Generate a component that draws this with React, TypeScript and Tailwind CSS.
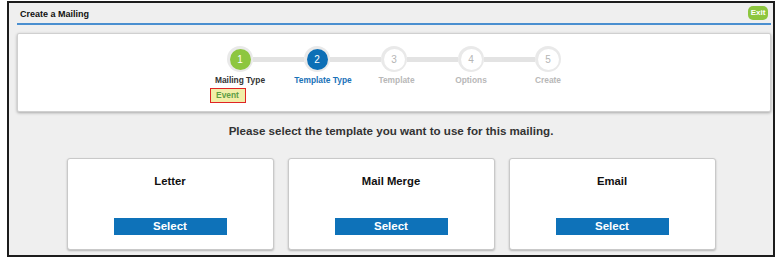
import React from "react";

const steps = [
  { n: 1, label: "Mailing Type", state: "done", shift: "" },
  { n: 2, label: "Template Type", state: "active", shift: "ml-[12px]" },
  { n: 3, label: "Template", state: "todo", shift: "ml-[5px]" },
  { n: 4, label: "Options", state: "todo", shift: "" },
  { n: 5, label: "Create", state: "todo", shift: "" },
];

function Step({ n, label, state, shift, first, last }: { n: number; label: string; state: string; shift: string; first: boolean; last: boolean }) {
  const inner =
    state === "done"
      ? "bg-[#8dc63f] text-white"
      : state === "active"
      ? "bg-[#0d6fb6] text-white"
      : "bg-white text-[#b5b5b5]";
  const labelColor =
    state === "done" ? "text-[#333333]" : state === "active" ? "text-[#1a72b8]" : "text-[#b8b8b8]";
  return (
    <div className="w-[77px] flex flex-col items-center">
      <div className="w-full h-[26px] flex items-center">
        <div className={`flex-1 h-[5px] ${first ? "" : "bg-[#e3e3e3]"}`} />
        <div className="w-[26px] h-[26px] rounded-full bg-[#e9e9e9] flex items-center justify-center">
          <div className={`w-[21px] h-[21px] rounded-full flex items-center justify-center text-[10px] ${inner}`}>
            {n}
          </div>
        </div>
        <div className={`flex-1 h-[5px] ${last ? "" : "bg-[#e3e3e3]"}`} />
      </div>
      <div className={`mt-[3px] leading-[10px] text-[8.4px] font-bold whitespace-nowrap ${labelColor} ${shift}`}>{label}</div>
      {n === 1 && (
        <div className="self-start ml-[8px] mt-[3px] w-[36px] h-[15px] border border-[#e02424] bg-[#f1eea8] flex items-center justify-center">
          <span className="text-[8.4px] font-bold text-[#5f9e45] leading-none">Event</span>
        </div>
      )}
    </div>
  );
}

function Card({ title }: { title: string }) {
  return (
    <div className="w-[207px] h-[92px] bg-white border border-[#c9c9c9] rounded-[3px] shadow-[0_1px_2px_rgba(0,0,0,0.25)] flex flex-col items-center pt-[15px]">
      <div className="text-[11.3px] font-bold leading-[14px] text-[#111]">{title}</div>
      <div className="mt-[30px] w-[113px] h-[17px] bg-[#0e72b9] flex items-center justify-center">
        <span className="text-white text-[11.5px] font-bold leading-none">Select</span>
      </div>
    </div>
  );
}

export default function App() {
  return (
    <div className="w-[782px] h-[263px] bg-white pt-px" style={{ fontFamily: '"Liberation Sans", Arial, sans-serif' }}>
      <div className="ml-[7px] w-[768px] h-[256px] border-2 border-[#1c1c1c] bg-[#efefef] flex flex-col">
        <div className="ml-[8px] mr-[2px] h-[22px] border-b-2 border-[#4a8fd0] flex items-start justify-between">
          <div className="mt-[6px] ml-[3px] text-[9px] font-bold leading-[10px] text-[#111]">Create a Mailing</div>
          <div className="mt-[3px] mr-[3px] w-[20px] h-[14px] rounded-[5px] bg-[#8dc63f] flex items-center justify-center">
            <span className="text-white text-[8px] font-bold leading-none">Exit</span>
          </div>
        </div>
        <div className="ml-[8px] mr-[2px] mt-[8px] bg-white border border-[#d0d0d0] rounded-[2px] shadow-[0_1px_3px_rgba(0,0,0,0.3)] pt-[12px] pb-[8px] flex justify-center items-start">
          {steps.map((s, i) => (
            <Step key={s.n} n={s.n} label={s.label} state={s.state} shift={s.shift} first={i === 0} last={i === steps.length - 1} />
          ))}
        </div>
        <div className="mt-[11px] text-center text-[11.6px] font-bold leading-[16px] text-[#333]">
          Please select the template you want to use for this mailing.
        </div>
        <div className="mt-[19px] flex justify-center gap-[14px]">
          <Card title="Letter" />
          <Card title="Mail Merge" />
          <Card title="Email" />
        </div>
      </div>
    </div>
  );
}
